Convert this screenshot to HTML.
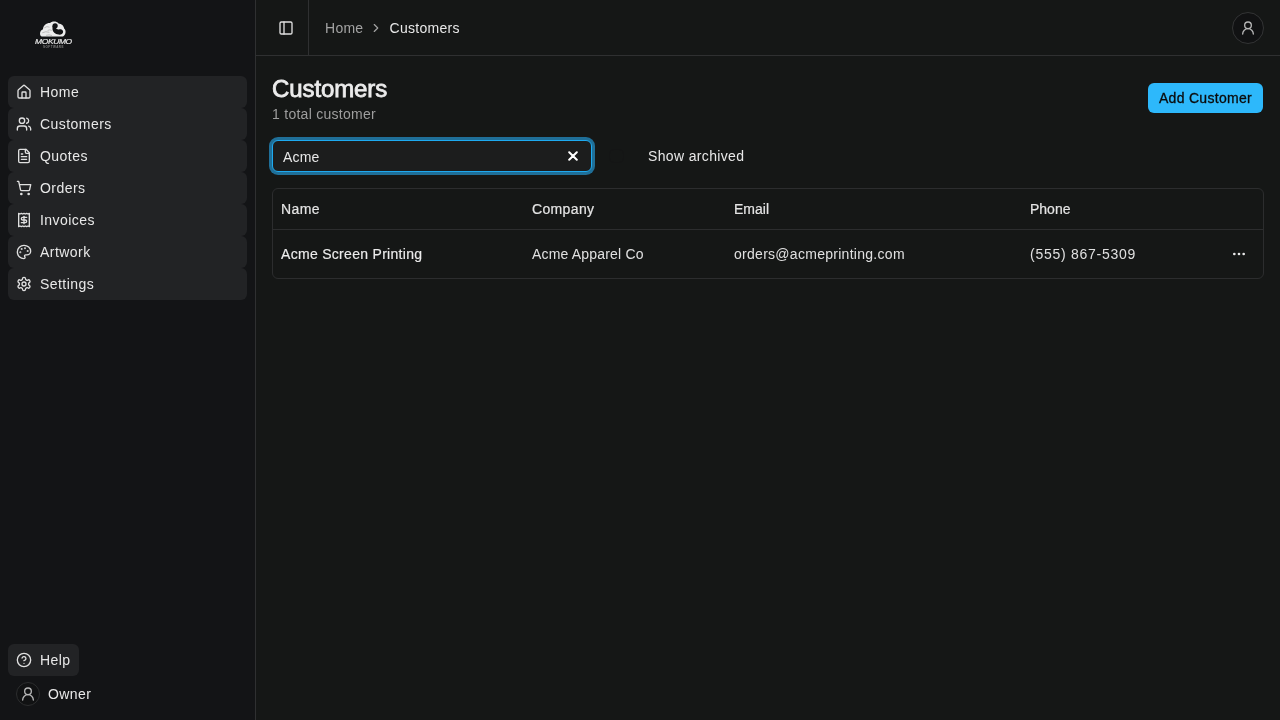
<!DOCTYPE html>
<html><head><meta charset="utf-8">
<style>
*{box-sizing:border-box;margin:0;padding:0}
html,body{width:1280px;height:720px;overflow:hidden;background:#151716;font-family:"Liberation Sans",sans-serif;color:#e6e6e6}
.side{position:absolute;left:0;top:0;width:255px;height:720px;background:#131416}
.vline{position:absolute;left:255px;top:0;width:1px;height:720px;background:#2f3031}
.main{position:absolute;left:256px;top:0;width:1024px;height:720px;background:#151716}
.hdr{position:absolute;left:0;top:0;width:1024px;height:55px}
.hline{position:absolute;left:0;top:55px;width:1024px;height:1px;background:#2f3031}
.sep{position:absolute;left:52px;top:0;width:1px;height:55px;background:#2f3031}
.nav{position:absolute;left:8px;width:239px;height:32px;background:#222325;border-radius:6px}
.nav svg{position:absolute;left:8px;top:8px}
.nav span{position:absolute;left:32px;top:0;line-height:32px;font-size:14px;color:#e8e8e8;letter-spacing:0.45px}
svg.i{fill:none;stroke:#e0e0e0;stroke-width:2;stroke-linecap:round;stroke-linejoin:round}
.t{position:absolute;white-space:nowrap}
</style></head><body>
<div id="root" style="position:absolute;left:0;top:0;width:1280px;height:720px;will-change:transform">
<div class="side">
  <!-- logo -->
  <svg class="t" style="left:28px;top:14px" width="52" height="40" viewBox="28 14 52 40">
    <path d="M42 36.6 C39.3 36 39.2 30.5 43 29.2 C43 25.5 46.5 22.8 50.2 23 C51.5 21.2 56.5 20.8 58.6 23.4 C61.3 23.6 64 25.6 64.1 28.6 C66.4 30.2 66 35.2 63 36.4 Z" fill="#ececec"/>
    <path d="M44.6 27.6 q2.2 -1.8 4.6 -0.6 M42.6 32.6 q3.2 -1.6 6.4 -0.4 M46.5 35.2 q2.6 -0.9 5.2 0.2 M48 30.2 q1.6 -1 3.4 0" fill="none" stroke="#a8a8a8" stroke-width="0.7" stroke-linecap="round"/>
    <g fill="#131416"><circle cx="55.1" cy="25.8" r="2.65"/><path d="M52.5 26 L52.5 29.5 C52.8 32 55 34.3 58.5 34.6 C61.5 34.9 63.3 33.5 63.1 31.5 C62.9 29.8 61 29.2 59 29.4 C57.5 29.5 56.4 29.2 56 28 L56 26 Z"/></g>
  </svg>
  <div class="t" style="left:35px;top:37px;font-style:italic;font-size:8.5px;line-height:10px;color:#e0e0e0;letter-spacing:-0.4px;-webkit-text-stroke:0.25px #e0e0e0;transform:scaleY(0.92);transform-origin:0 0">MOKUMO</div>
  <div class="t" style="left:43px;top:45px;font-size:3px;line-height:4px;color:#808080;letter-spacing:0.5px;font-weight:bold">SOFTWARE</div>

  <div class="nav" style="top:76px"><svg class="i" width="16" height="16" viewBox="0 0 24 24"><path d="M15 21v-8a1 1 0 0 0-1-1h-4a1 1 0 0 0-1 1v8"/><path d="M3 10a2 2 0 0 1 .709-1.528l7-5.999a2 2 0 0 1 2.582 0l7 5.999A2 2 0 0 1 21 10v9a2 2 0 0 1-2 2H5a2 2 0 0 1-2-2z"/></svg><span>Home</span></div>
  <div class="nav" style="top:108px"><svg class="i" width="16" height="16" viewBox="0 0 24 24"><path d="M16 21v-2a4 4 0 0 0-4-4H6a4 4 0 0 0-4 4v2"/><circle cx="9" cy="7" r="4"/><path d="M22 21v-2a4 4 0 0 0-3-3.87"/><path d="M16 3.13a4 4 0 0 1 0 7.75"/></svg><span>Customers</span></div>
  <div class="nav" style="top:140px"><svg class="i" width="16" height="16" viewBox="0 0 24 24"><path d="M15 2H6a2 2 0 0 0-2 2v16a2 2 0 0 0 2 2h12a2 2 0 0 0 2-2V7Z"/><path d="M14 2v4a2 2 0 0 0 2 2h4"/><path d="M10 9H8"/><path d="M16 13H8"/><path d="M16 17H8"/></svg><span>Quotes</span></div>
  <div class="nav" style="top:172px"><svg class="i" width="16" height="16" viewBox="0 0 24 24"><circle cx="8" cy="21" r="1"/><circle cx="19" cy="21" r="1"/><path d="M2.05 2.05h2l2.66 12.42a2 2 0 0 0 2 1.58h9.78a2 2 0 0 0 1.95-1.57l1.65-7.43H5.12"/></svg><span>Orders</span></div>
  <div class="nav" style="top:204px"><svg class="i" width="16" height="16" viewBox="0 0 24 24"><path d="M4 2v20l2-1 2 1 2-1 2 1 2-1 2 1 2-1 2 1V2l-2 1-2-1-2 1-2-1-2 1-2-1-2 1Z"/><path d="M16 8h-6a2 2 0 1 0 0 4h4a2 2 0 1 1 0 4H8"/><path d="M12 17.5v-11"/></svg><span>Invoices</span></div>
  <div class="nav" style="top:236px"><svg class="i" width="16" height="16" viewBox="0 0 24 24"><circle cx="13.5" cy="6.5" r=".5" fill="#e0e0e0"/><circle cx="17.5" cy="10.5" r=".5" fill="#e0e0e0"/><circle cx="8.5" cy="7.5" r=".5" fill="#e0e0e0"/><circle cx="6.5" cy="12.5" r=".5" fill="#e0e0e0"/><path d="M12 2C6.5 2 2 6.5 2 12s4.5 10 10 10c.926 0 1.648-.746 1.648-1.688 0-.437-.18-.835-.437-1.125-.29-.289-.438-.652-.438-1.125a1.64 1.64 0 0 1 1.668-1.668h1.996c3.051 0 5.555-2.503 5.555-5.554C21.965 6.012 17.461 2 12 2z"/></svg><span>Artwork</span></div>
  <div class="nav" style="top:268px"><svg class="i" width="16" height="16" viewBox="0 0 24 24"><path d="M12.22 2h-.44a2 2 0 0 0-2 2v.18a2 2 0 0 1-1 1.73l-.43.25a2 2 0 0 1-2 0l-.15-.08a2 2 0 0 0-2.73.73l-.22.38a2 2 0 0 0 .73 2.73l.15.1a2 2 0 0 1 1 1.72v.51a2 2 0 0 1-1 1.74l-.15.09a2 2 0 0 0-.73 2.73l.22.38a2 2 0 0 0 2.73.73l.15-.08a2 2 0 0 1 2 0l.43.25a2 2 0 0 1 1 1.73V20a2 2 0 0 0 2 2h.44a2 2 0 0 0 2-2v-.18a2 2 0 0 1 1-1.73l.43-.25a2 2 0 0 1 2 0l.15.08a2 2 0 0 0 2.73-.73l.22-.39a2 2 0 0 0-.73-2.73l-.15-.08a2 2 0 0 1-1-1.74v-.5a2 2 0 0 1 1-1.74l.15-.09a2 2 0 0 0 .73-2.73l-.22-.38a2 2 0 0 0-2.73-.73l-.15.08a2 2 0 0 1-2 0l-.43-.25a2 2 0 0 1-1-1.73V4a2 2 0 0 0-2-2z"/><circle cx="12" cy="12" r="3"/></svg><span>Settings</span></div>

  <div class="nav" style="top:644px;width:71px"><svg class="i" width="16" height="16" viewBox="0 0 24 24"><circle cx="12" cy="12" r="10"/><path d="M9.09 9a3 3 0 0 1 5.83 1c0 2-3 3-3 3"/><path d="M12 17h.01"/></svg><span style="letter-spacing:0.4px">Help</span></div>
  <div class="t" style="left:16px;top:682px;width:24px;height:24px;border-radius:50%;border:1px solid #2c2d2e;background:#111213"></div>
  <svg class="t i" style="left:20px;top:686px;stroke:#b8b8b8" width="16" height="16" viewBox="0 0 24 24"><circle cx="12" cy="8" r="5"/><path d="M20 21a8 8 0 0 0-16 0"/></svg>
  <div class="t" style="left:48px;top:684px;line-height:20px;font-size:14px;color:#e8e8e8;letter-spacing:0.4px">Owner</div>
</div>
<div class="vline"></div>
<div class="main">
  <div class="hdr">
    <svg class="t i" style="left:22px;top:20px" width="16" height="16" viewBox="0 0 24 24"><rect width="18" height="18" x="3" y="3" rx="2"/><path d="M9 3v18"/></svg>
    <div class="sep"></div>
    <div class="t" style="left:69px;top:18px;line-height:20px;font-size:14px;color:#a3a3a3;letter-spacing:0.27px">Home</div>
    <svg class="t" style="left:113px;top:21px;fill:none;stroke:#a3a3a3;stroke-width:2;stroke-linecap:round;stroke-linejoin:round" width="14" height="14" viewBox="0 0 24 24"><path d="m9 18 6-6-6-6"/></svg>
    <div class="t" style="left:133.5px;top:18px;line-height:20px;font-size:14px;color:#e8e8e8;letter-spacing:0.3px">Customers</div>
    <div class="t" style="left:976px;top:12px;width:32px;height:32px;border-radius:50%;border:1px solid #333435;background:#111213"></div>
    <svg class="t i" style="left:984px;top:20px;stroke:#b8b8b8" width="16" height="16" viewBox="0 0 24 24"><circle cx="12" cy="8" r="5"/><path d="M20 21a8 8 0 0 0-16 0"/></svg>
  </div>
  <div class="hline"></div>

  <div class="t" style="left:16px;top:74px;font-size:24px;line-height:30px;color:#ececec;-webkit-text-stroke:0.8px #ececec;letter-spacing:-0.1px">Customers</div>
  <div class="t" style="left:16px;top:104px;font-size:14px;line-height:20px;color:#9e9e9e;letter-spacing:0.27px">1 total customer</div>
  <div class="t" style="left:892px;top:83px;width:115px;height:30px;border-radius:6px;background:#2db8fb;color:#0b0b0b;font-size:14px;line-height:30px;text-align:center;letter-spacing:0.3px;-webkit-text-stroke:0.3px #0b0b0b">Add Customer</div>

  <!-- search -->
  <div class="t" style="left:13px;top:137px;width:326px;height:38px;border-radius:9px;background:#1f6f98"></div>
  <div class="t" style="left:16px;top:140px;width:320px;height:32px;border-radius:6px;border:1px solid #1eaaf0;background:#1c1d1d"></div>
  <div class="t" style="left:27px;top:147px;line-height:20px;font-size:14px;color:#e8e8e8;letter-spacing:0.2px">Acme</div>
  <svg class="t" style="left:312px;top:151px" width="10" height="10" viewBox="0 0 10 10"><path d="M1.2 1.2 8.8 8.8M8.8 1.2 1.2 8.8" stroke="#fff" stroke-width="2" stroke-linecap="round"/></svg>
  <div class="t" style="left:353px;top:149px;width:15px;height:14px;border-radius:5px;border:1px solid #141515"></div>
  <div class="t" style="left:392px;top:146px;line-height:20px;font-size:14px;color:#e8e8e8;letter-spacing:0.35px">Show archived</div>

  <!-- table -->
  <div class="t" style="left:16px;top:188px;width:992px;height:91px;border:1px solid #2c2d2e;border-radius:6px"></div>
  <div class="t" style="left:17px;top:229px;width:990px;height:1px;background:#2c2d2e"></div>
  <div class="t" style="left:25px;top:199px;line-height:20px;font-size:14px;color:#e4e4e4;letter-spacing:0.4px;-webkit-text-stroke:0.2px #e4e4e4">Name</div>
  <div class="t" style="left:276px;top:199px;line-height:20px;font-size:14px;color:#e4e4e4;letter-spacing:0.35px;-webkit-text-stroke:0.2px #e4e4e4">Company</div>
  <div class="t" style="left:478px;top:199px;line-height:20px;font-size:14px;color:#e4e4e4;-webkit-text-stroke:0.2px #e4e4e4">Email</div>
  <div class="t" style="left:774px;top:199px;line-height:20px;font-size:14px;color:#e4e4e4;-webkit-text-stroke:0.2px #e4e4e4">Phone</div>
  <div class="t" style="left:25px;top:244px;line-height:20px;font-size:14px;color:#ececec;letter-spacing:0.3px;-webkit-text-stroke:0.15px #ececec">Acme Screen Printing</div>
  <div class="t" style="left:276px;top:244px;line-height:20px;font-size:14px;color:#e0e0e0;letter-spacing:0.18px">Acme Apparel Co</div>
  <div class="t" style="left:478px;top:244px;line-height:20px;font-size:14px;color:#e0e0e0;letter-spacing:0.28px">orders@acmeprinting.com</div>
  <div class="t" style="left:774px;top:244px;line-height:20px;font-size:14px;color:#e0e0e0;letter-spacing:0.73px">(555) 867-5309</div>
  <svg class="t" style="left:975px;top:246px" width="16" height="16" viewBox="0 0 24 24"><circle cx="12" cy="12" r="2" fill="#e8e8e8"/><circle cx="19" cy="12" r="2" fill="#e8e8e8"/><circle cx="5" cy="12" r="2" fill="#e8e8e8"/></svg>
</div>
</div>
</body></html>
